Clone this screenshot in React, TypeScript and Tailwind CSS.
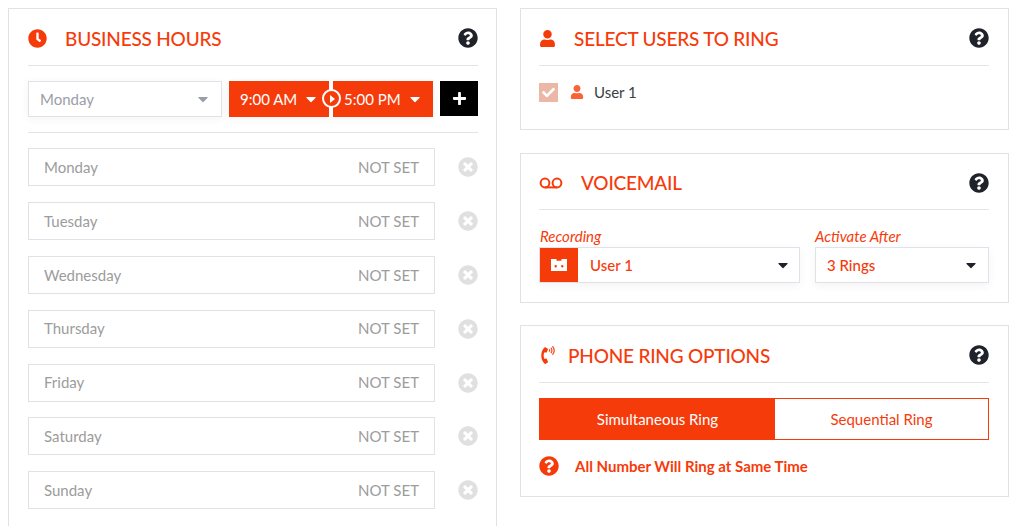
import type React from "react";
import { FaCaretDown, FaCheck, FaClock, FaPhoneVolume, FaPlus, FaQuestionCircle, FaTimesCircle, FaUser } from "react-icons/fa";

const days = ["Monday", "Tuesday", "Wednesday", "Thursday", "Friday", "Saturday", "Sunday"];

function VoicemailIcon({ className }: { className?: string }) {
	return (
		<svg viewBox="0 0 24 12" className={className} fill="none" stroke="currentColor" strokeWidth="2">
			<circle cx="6" cy="6" r="4.4" />
			<circle cx="18" cy="6" r="4.4" />
			<path d="M6 10.4h12" />
		</svg>
	);
}

function TapeIcon({ className }: { className?: string }) {
	return (
		<svg viewBox="0 0 16 12" className={className} fill="currentColor">
			<path fillRule="evenodd" d="M0 0h5.5v1.8h5V0H16v12H0zM4.7 6a1.2 1.2 0 1 0 0 2.4 1.2 1.2 0 0 0 0-2.4zm6.6 0a1.2 1.2 0 1 0 0 2.4 1.2 1.2 0 0 0 0-2.4z" />
		</svg>
	);
}

function PanelHeader({ icon, title, gap, height }: { icon: React.ReactNode; title: string; gap: string; height: string }) {
	return (
		<div className={`flex items-center border-b border-[#e2e4e8] ${height}`}>
			<div className={`flex items-center ${gap}`}>
				{icon}
				<h2 className="text-[19px] leading-none font-medium tracking-[-0.2px] text-[#f63b0b]">{title}</h2>
			</div>
			<FaQuestionCircle className="ml-auto text-[20px] text-[#1f2329]" />
		</div>
	);
}

function DayRow({ day }: { day: string }) {
	return (
		<div className="mb-[15.83px] flex items-center">
			<div className="flex h-[38px] w-[407px] items-center justify-between border border-[#e0e2e6] pr-[15px] pl-[15px] text-[15px] text-[#9c9c9c]">
				<span>{day}</span>
				<span>NOT SET</span>
			</div>
			<FaTimesCircle className="ml-[23px] text-[20px] text-[#e0e0e0]" />
		</div>
	);
}

export default function App() {
	return (
		<div className="flex h-[526px] gap-[23px] overflow-hidden bg-white pt-2 pl-2 font-['Lato',sans-serif]">
			{/* Business hours */}
			<section className="h-[600px] w-[489px] shrink-0 border border-[#e0e2e6] pr-[18px] pl-[19px]">
				<PanelHeader
					icon={<FaClock className="text-[19px] text-[#f63b0b]" />}
					title="BUSINESS HOURS"
					gap="gap-[18px]"
					height="h-[57px] pt-[2px]"
				/>
				<div className="mt-[15px] flex items-start">
					<div className="flex h-[36px] w-[194px] items-center justify-between border border-[#dfe2e8] pr-[10px] pl-[11px] text-[15px] text-[#9a9ea8] shadow-[0_2px_8px_rgba(60,70,90,0.06)]">
						<span>Monday</span>
						<FaCaretDown className="text-[16px] text-[#9a9ea8]" />
					</div>
					<div className="relative ml-[7px] flex h-[36px] w-[204px] justify-between text-[15px] text-white shadow-[0_2px_8px_rgba(60,70,90,0.06)]">
						<div className="flex w-[100px] items-center bg-[#f63b0b] pl-[11px]">
							<span>9:00 AM</span>
							<FaCaretDown className="ml-[6px] text-[16px]" />
						</div>
						<div className="flex w-[100px] items-center bg-[#f63b0b] pl-[11px]">
							<span>5:00 PM</span>
							<FaCaretDown className="ml-[6px] text-[16px]" />
						</div>
						{/* play marker over the divider */}
						<div className="absolute top-[8px] left-[93px] flex h-[19px] w-[19px] items-center justify-center rounded-full border-2 border-white bg-[#f63b0b]">
							<span className="ml-[1px] h-0 w-0 border-y-[4px] border-l-[5px] border-y-transparent border-l-white" />
						</div>
					</div>
					<div className="ml-[7px] flex h-[35px] w-[38px] items-center justify-center bg-black text-white">
						<FaPlus className="text-[15px]" />
					</div>
				</div>
				<div className="mt-[15px] mb-[15.2px] border-t border-[#e2e4e8]" />
				{days.map((day) => (
					<DayRow key={day} day={day} />
				))}
			</section>

			<div className="flex w-[489px] shrink-0 flex-col">
				{/* Users */}
				<section className="h-[122px] border border-[#e0e2e6] pr-[19px] pl-[18px]">
					<PanelHeader
						icon={<FaUser className="text-[17px] text-[#f63b0b]" />}
						title="SELECT USERS TO RING"
						gap="gap-[18px]"
						height="h-[57px] pt-[2px]"
					/>
					<div className="mt-[15px] flex items-center">
						<div className="flex h-[19px] w-[19px] items-center justify-center bg-[#ebb8a5] text-white">
							<FaCheck className="text-[13px]" />
						</div>
						<FaUser className="ml-[12px] text-[14px] text-[#fb6236]" />
						<span className="ml-[10px] text-[15px] text-[#3a3d42]">User 1</span>
					</div>
				</section>

				{/* Voicemail */}
				<section className="mt-[23px] h-[150px] border border-[#e0e2e6] pr-[19px] pl-[18px]">
					<PanelHeader
						icon={<VoicemailIcon className="h-[12px] w-[24px] text-[#f63b0b]" />}
						title="VOICEMAIL"
						gap="gap-[18px]"
						height="h-[56px] pt-[2px]"
					/>
					<div className="mt-[15px] flex gap-[15px]">
						<div className="w-[261px]">
							<div className="pl-[1px] text-[15px] leading-[22px] text-[#f63b0b] italic">Recording</div>
							<div className="flex h-[36px] items-center border border-[#dfe2e8] pr-[8px] text-[15px] font-medium text-[#f63b0b] shadow-[0_3px_8px_rgba(60,70,90,0.06)]">
								<div className="flex h-full w-[38px] items-center justify-center bg-[#f63b0b] text-white">
									<TapeIcon className="h-[12px] w-[16px]" />
								</div>
								<span className="ml-[12px]">User 1</span>
								<FaCaretDown className="ml-auto text-[16px] text-[#1f2329]" />
							</div>
						</div>
						<div className="w-[174px]">
							<div className="text-[15px] leading-[22px] text-[#f63b0b] italic">Activate After</div>
							<div className="flex h-[36px] items-center border border-[#dfe2e8] pr-[9px] pl-[11px] text-[15px] font-medium text-[#f63b0b] shadow-[0_3px_8px_rgba(60,70,90,0.06)]">
								<span>3 Rings</span>
								<FaCaretDown className="ml-auto text-[16px] text-[#1f2329]" />
							</div>
						</div>
					</div>
				</section>

				{/* Ring options */}
				<section className="mt-[22px] h-[172px] border border-[#e0e2e6] pr-[19px] pl-[18px]">
					<PanelHeader
						icon={<FaPhoneVolume className="text-[18px] text-[#f63b0b]" />}
						title="PHONE RING OPTIONS"
						gap="gap-[11px]"
						height="h-[57px] pt-[2px]"
					/>
					<div className="mt-[15px] flex h-[42px] border border-[#f63b0b] text-[15px]">
						<div className="flex w-[235px] items-center justify-center bg-[#f63b0b] text-white">Simultaneous Ring</div>
						<div className="flex flex-1 items-center justify-center text-[#f63b0b]">Sequential Ring</div>
					</div>
					<div className="mt-[15px] flex items-center">
						<FaQuestionCircle className="text-[20px] text-[#f63b0b]" />
						<span className="ml-[16px] text-[15px] font-bold text-[#f63b0b]">All Number Will Ring at Same Time</span>
					</div>
				</section>
			</div>
		</div>
	);
}
